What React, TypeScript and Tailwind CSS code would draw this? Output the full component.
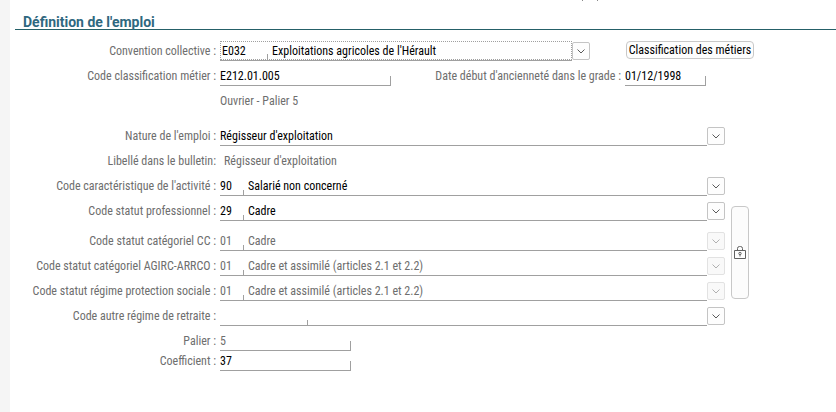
import { useRef, type ReactNode } from "react";

interface FieldRowProps {
  id: string;
  label: string;
  children: ReactNode;
}

interface ComboProps {
  id: string;
  value: string;
  code?: string;
  codeWidth?: string;
  disabled?: boolean;
  focused?: boolean;
}

const FieldRow = ({ id, label, children }: FieldRowProps) => {
  return (
    <div className="flex h-5 items-center">
      <label htmlFor={id} className="w-[206px] shrink-0 text-right whitespace-nowrap text-[#6e6e6e]">
        {label}
      </label>
      <div className="ml-1 flex h-5 min-w-0 flex-1 items-center">{children}</div>
    </div>
  );
};

const Combo = ({ id, value, code, codeWidth, disabled, focused }: ComboProps) => {
  const selectRef = useRef<HTMLSelectElement>(null);

  return (
    <>
      <div className="flex h-5 min-w-0 flex-1 border-b border-[#a0a0a0]">
        <div className={`flex min-w-0 flex-1 ${focused ? "border border-dotted border-[#a0a0a0] pl-px" : ""}`}>
          {codeWidth && (
            <>
              <input
                id={`${id}-code`}
                aria-label={`Code ${id}`}
                defaultValue={code}
                disabled={disabled}
                className={`${codeWidth} shrink-0 bg-transparent outline-none disabled:text-[#6e6e6e]`}
              />
              <span className="mr-1 h-[5px] w-px shrink-0 self-end bg-[#a0a0a0]" />
            </>
          )}
          <select
            id={id}
            ref={selectRef}
            defaultValue={value}
            disabled={disabled}
            className="min-w-0 flex-1 appearance-none bg-transparent leading-4 opacity-100 outline-none disabled:text-[#6e6e6e]"
          >
            <option>{value}</option>
          </select>
        </div>
      </div>
      <button
        type="button"
        aria-label="Ouvrir la liste"
        disabled={disabled}
        onClick={() => selectRef.current?.showPicker()}
        className="flex size-[18px] shrink-0 items-center justify-center rounded-xs border border-[#c4c4c4] bg-[#fdfdfd] text-[#5a5a5a] disabled:border-[#e2e2e2] disabled:bg-[#f9f9f9] disabled:text-[#b0b0b0]"
      >
        <svg width="8" height="5" viewBox="0 0 8 5" fill="none" stroke="currentColor">
          <path d="M0.5 0.5 L4 4 L7.5 0.5" />
        </svg>
      </button>
    </>
  );
};

const EmploymentForm = () => {
  return (
    <div className="flex min-h-screen bg-white font-['Roboto_Condensed','Lato',sans-serif] text-[12px] leading-5 text-black">
      <aside className="w-[10px] shrink-0 bg-[#f5f5f5]" />
      <main className="min-w-0 flex-1">
        <div className="flex h-px justify-end gap-[14px] pr-[238px]">
          <span className="w-px bg-[#8a8a8a]" />
          <span className="w-px bg-[#8a8a8a]" />
        </div>
        <h1 className="ml-[5px] border-b border-[#256068] pt-[15px] pl-2 font-['Roboto',sans-serif] text-[14px] leading-[13px] font-bold text-[#2f6880]">
          Définition de l'emploi
        </h1>
        <form className="mt-[11px]">
          <div className="flex flex-col gap-[5px]">
            <div className="flex pr-[82px]">
              <div className="min-w-0 flex-1">
                <FieldRow id="convention" label="Convention collective :">
                  <Combo
                    id="convention"
                    code="E032"
                    codeWidth="w-[45px]"
                    value="Exploitations agricoles de l'Hérault"
                    focused
                  />
                </FieldRow>
              </div>
              <button
                type="button"
                className="ml-9 h-[18px] w-32 rounded border border-[#c8c8c8] bg-[#fdfdfd] leading-4 whitespace-nowrap"
              >
                Classification des métiers
              </button>
            </div>
            <div className="flex pr-[130px]">
              <div className="min-w-0 flex-1">
                <FieldRow id="metier" label="Code classification métier :">
                  <input
                    id="metier"
                    defaultValue="E212.01.005"
                    className="h-5 w-full border-b border-[#a0a0a0] outline-none"
                  />
                  <span className="h-[10px] w-px shrink-0 self-end bg-[#a0a0a0]" />
                </FieldRow>
              </div>
              <label htmlFor="anciennete" className="ml-10 w-[190px] text-right whitespace-nowrap text-[#6e6e6e]">
                Date début d'ancienneté dans le grade :
              </label>
              <div className="ml-1 flex h-5">
                <input
                  id="anciennete"
                  defaultValue="01/12/1998"
                  className="h-5 w-20 border-b border-[#a0a0a0] outline-none"
                />
                <span className="h-[10px] w-px self-end bg-[#a0a0a0]" />
              </div>
            </div>
            <p className="h-5 pl-[210px] text-[#6e6e6e]">Ouvrier - Palier 5</p>
          </div>

          <div className="mt-[15px] mr-[87px] grid grid-cols-[minmax(0,1fr)_18px] gap-x-[6px] gap-y-[5px]">
            <div className="col-start-1 flex flex-col gap-[5px]">
              <FieldRow id="nature" label="Nature de l'emploi :">
                <Combo id="nature" value="Régisseur d'exploitation" />
              </FieldRow>
              <FieldRow id="libelle" label="Libellé dans le bulletin:">
                <output id="libelle" className="pl-1 text-[#6e6e6e]">
                  Régisseur d'exploitation
                </output>
              </FieldRow>
              <FieldRow id="activite" label="Code caractéristique de l'activité :">
                <Combo id="activite" code="90" codeWidth="w-[23px]" value="Salarié non concerné" />
              </FieldRow>
            </div>
            <div className="col-start-1 flex flex-col gap-[5px]">
              <FieldRow id="professionnel" label="Code statut professionnel :">
                <Combo id="professionnel" code="29" codeWidth="w-[23px]" value="Cadre" />
              </FieldRow>
              <div className="mt-[5px] flex flex-col gap-[5px]">
                <FieldRow id="categoriel" label="Code statut catégoriel CC :">
                  <Combo id="categoriel" code="01" codeWidth="w-[23px]" value="Cadre" disabled />
                </FieldRow>
                <FieldRow id="agirc" label="Code statut catégoriel AGIRC-ARRCO :">
                  <Combo
                    id="agirc"
                    code="01"
                    codeWidth="w-[23px]"
                    value="Cadre et assimilé (articles 2.1 et 2.2)"
                    disabled
                  />
                </FieldRow>
                <FieldRow id="protection" label="Code statut régime protection sociale :">
                  <Combo
                    id="protection"
                    code="01"
                    codeWidth="w-[23px]"
                    value="Cadre et assimilé (articles 2.1 et 2.2)"
                    disabled
                  />
                </FieldRow>
              </div>
            </div>
            <button
              type="button"
              aria-label="Verrouiller les statuts"
              className="mt-[5px] mb-[2px] flex items-center justify-center rounded border border-[#c8c8c8] bg-[#fcfcfc] text-[#606060]"
            >
              <svg width="12" height="13" viewBox="0 0 12 13" fill="none" stroke="currentColor" className="shrink-0">
                <path d="M0.5 4.5 H11.5 V12.5 H0.5 Z M3.5 4.5 V2.5 Q3.5 0.5 5.5 0.5 H6.5 Q8.5 0.5 8.5 2.5 V4.5" />
                <circle cx="6" cy="7.5" r="1.2" />
                <path d="M6 8.5 V10.5" />
              </svg>
            </button>
            <div className="col-start-1">
              <FieldRow id="retraite" label="Code autre régime de retraite :">
                <Combo id="retraite" code="" codeWidth="w-[87px]" value="" />
              </FieldRow>
            </div>
          </div>

          <div className="mt-[5px] w-[341px]">
            <FieldRow id="palier" label="Palier :">
              <input
                id="palier"
                defaultValue="5"
                readOnly
                className="h-5 w-full border-b border-[#a0a0a0] text-[#6e6e6e] outline-none"
              />
              <span className="h-[10px] w-px shrink-0 self-end bg-[#a0a0a0]" />
            </FieldRow>
            <FieldRow id="coefficient" label="Coefficient :">
              <input
                id="coefficient"
                defaultValue="37"
                className="h-5 w-full border-b border-[#a0a0a0] outline-none"
              />
              <span className="h-[10px] w-px shrink-0 self-end bg-[#a0a0a0]" />
            </FieldRow>
          </div>
        </form>
      </main>
    </div>
  );
};

export default EmploymentForm;
